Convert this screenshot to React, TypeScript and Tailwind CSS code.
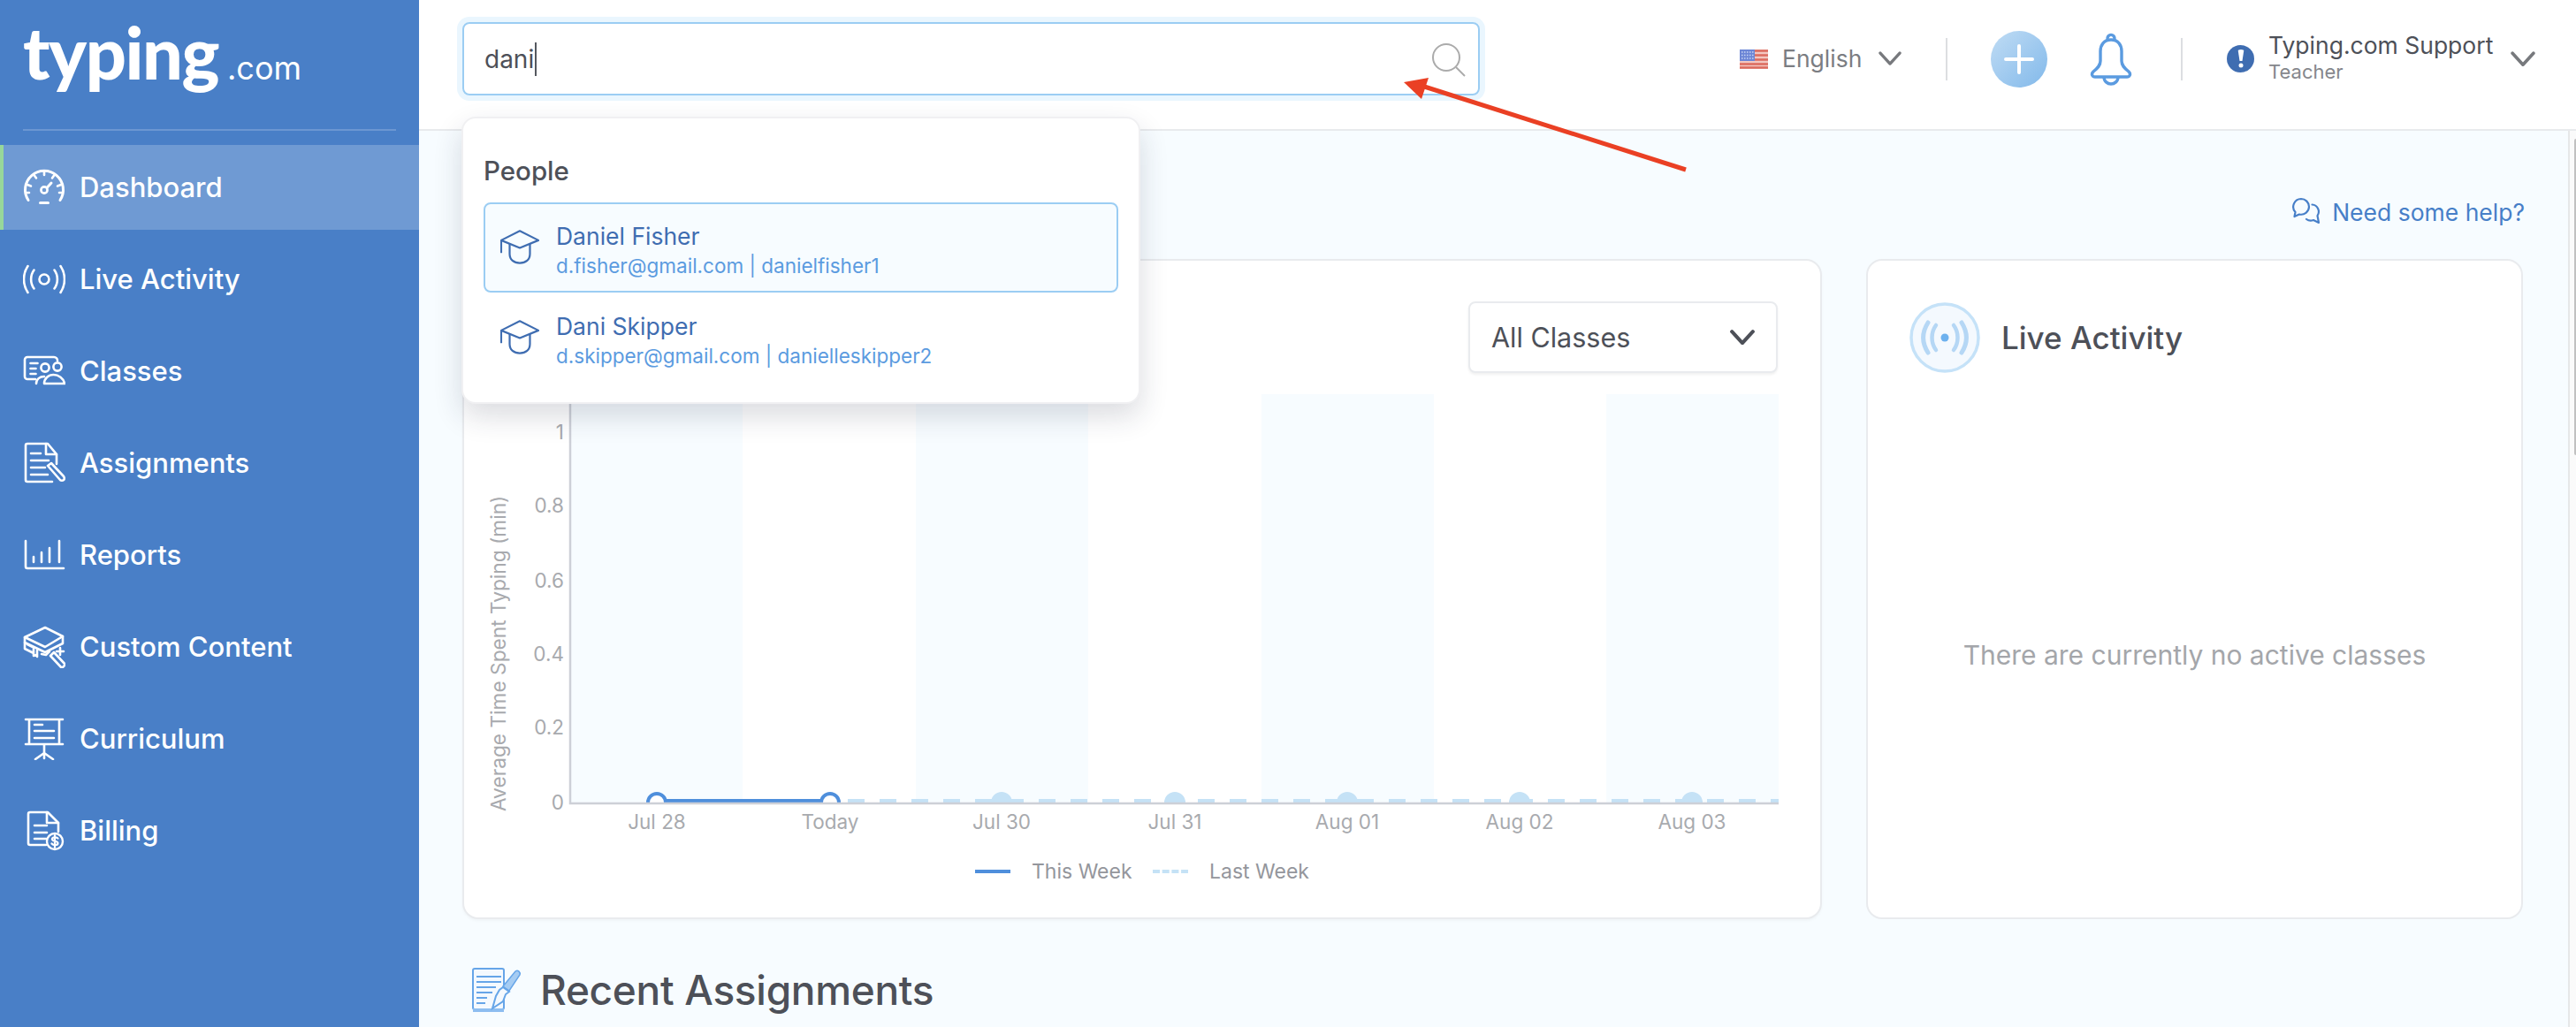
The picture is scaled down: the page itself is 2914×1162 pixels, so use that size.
import React from "react";

const NAV_STROKE = { fill: "none", stroke: "#fff", strokeWidth: 2.6, strokeLinecap: "round" as const, strokeLinejoin: "round" as const };

const Gauge = () => (
  <svg width="48" height="48" viewBox="0 0 48 48" {...NAV_STROKE}>
    <path d="M6 38.5 A21.5 21.5 0 1 1 42 38.5" strokeWidth="3" />
    <path d="M24 6v4M12.5 10l2.5 3.5M35.5 10 33 13.5M5 21l4 1.5M43 21l-4 1.5M3 30h4M45 30h-4" />
    <circle cx="24" cy="27" r="3.6" />
    <path d="M27 24.5 32 19" strokeWidth="3" />
    <path d="M19.5 41.5h9" strokeWidth="3" />
  </svg>
);
const Live = () => (
  <svg width="48" height="48" viewBox="0 0 48 48" {...NAV_STROKE}>
    <circle cx="24" cy="24" r="5.5" />
    <path d="M12.5 13.5c-4.5 6-4.5 15 0 21M35.5 13.5c4.5 6 4.5 15 0 21" />
    <path d="M5.5 9c-6 9-6 21 0 30M42.5 9c6 9 6 21 0 30" />
  </svg>
);
const ClassesIcon = () => (
  <svg width="48" height="48" viewBox="0 0 48 48" {...NAV_STROKE}>
    <path d="M14 33H5a3 3 0 0 1-3-3V11a3 3 0 0 1 3-3h30a4 4 0 0 1 4 4" />
    <path d="M8.5 15h8M8.5 21h6M8.5 27h6" />
    <circle cx="25" cy="20" r="4.6" />
    <circle cx="39" cy="19" r="4.6" />
    <path d="M15 38c0-5 4-8 9-8M24 38c0-6 5-10 10.500-10S46 32 47 38Z" />
  </svg>
);
const AssignIcon = () => (
  <svg width="48" height="48" viewBox="0 0 48 48" {...NAV_STROKE}>
    <path d="M33 45H5a2 2 0 0 1-2-2V4a2 2 0 0 1 2-2h23l10 12v11" />
    <path d="M26 2v12h12" />
    <path d="M9 13h11M9 21h20M9 29h16M9 37h19" />
    <path d="m28 27 4-3 14 15c1 1.500 1 3 0 4s-3 1-4 0Z" />
  </svg>
);
const ReportsIcon = () => (
  <svg width="48" height="48" viewBox="0 0 48 48" {...NAV_STROKE}>
    <path d="M3 8v29a2 2 0 0 0 2 2h41" />
    <path d="M12 26v6M21 21v11M30 16v16M41 8v24" />
  </svg>
);
const CustomIcon = () => (
  <svg width="48" height="48" viewBox="0 0 48 48" {...NAV_STROKE}>
    <path d="M25 2 45 12v8L25 30 2 19v-6Z" />
    <path d="M2 13 25 24 45 12" />
    <path d="M2 19v7l10 5M5 21l6 3M12 26v8l3-1 1 2v-7M21 32l5 1 4-4" />
    <path d="m31 34 4-4 13 14-4 4Z" />
    <path d="M38 29h8M42 25v8" />
  </svg>
);
const CurrIcon = () => (
  <svg width="48" height="48" viewBox="0 0 48 48" {...NAV_STROKE}>
    <path d="M3 2h42M7 2v28M41 2v28M3 30h42M24 31v10M14 47l10-7 10 7M24 41v5" />
    <path d="M13 8h9M13 15h22M13 23h22" />
  </svg>
);
const BillIcon = () => (
  <svg width="48" height="48" viewBox="0 0 48 48" {...NAV_STROKE}>
    <path d="M26 40H8a2 2 0 0 1-2-2V5a2 2 0 0 1 2-2h20l12 12v10" />
    <path d="M27 3v12h13" />
    <path d="M13 18h14M13 26h14M13 33h13" />
    <circle cx="36" cy="36" r="9" strokeWidth="2.4" />
    <path d="M39.500 32.500c-1-1.500-6.500-2-6.500 1s6.500 1.500 6.500 4.500-5.500 2.500-7 .5M36 29v14" strokeWidth="2.200" />
  </svg>
);

const NAV: [string, React.FC][] = [
  ["Dashboard", Gauge],
  ["Live Activity", Live],
  ["Classes", ClassesIcon],
  ["Assignments", AssignIcon],
  ["Reports", ReportsIcon],
  ["Custom Content", CustomIcon],
  ["Curriculum", CurrIcon],
  ["Billing", BillIcon],
];

const Cap = () => (
  <svg width="44" height="40" viewBox="-1 -1 46 41" className="shrink-0" fill="none" stroke="#3f6db1" strokeWidth="2.300" strokeLinejoin="round">
    <path d="M22 0 44 11 22 20 0 11Z" />
    <path d="M0 11v15" />
    <path d="M10 15v12c0 7 5 11 12 11s12-4 12-11V15" />
  </svg>
);

const Chev = ({ w = 26, color = "#77797d", sw = 3.4 }: { w?: number; color?: string; sw?: number }) => (
  <svg width={w} height={w * 0.62} viewBox="0 0 26 16" fill="none" stroke={color} strokeWidth={sw} strokeLinecap="round" strokeLinejoin="round" className="shrink-0">
    <path d="M2 2 13 14 24 2" />
  </svg>
);

const Flag = () => (
  <svg width="32" height="22" viewBox="0 0 32 22" className="shrink-0">
    <rect width="32" height="22" fill="#f3c7c0" />
    <path d="M0 1.500h32M0 6.500h32M0 11.500h32M0 16.500h32M0 20.500h32" stroke="#dc6b5e" strokeWidth="2.400" />
    <rect width="17" height="13" fill="#6c86d6" />
    <path d="M2 3h14M2 6.500h14M2 10h14" stroke="#c8d4f3" strokeWidth="1.500" strokeDasharray="1.500 1.500" />
  </svg>
);

const Chart = () => {
  const ys: [string, number][] = [["1", 489], ["0.8", 572], ["0.6", 657], ["0.4", 740], ["0.2", 823], ["0", 908]];
  const xs: [string, number][] = [["Jul 28", 743], ["Today", 939], ["Jul 30", 1133], ["Jul 31", 1329], ["Aug 01", 1524], ["Aug 02", 1719], ["Aug 03", 1914]];
  const dashes: number[] = [];
  for (let x = 959; x < 2012; x += 36) dashes.push(x);
  return (
    <svg width="1534" height="600" viewBox="525 430 1534 600" className="block mt-2" fontFamily="Inter, sans-serif">
      {[645, 1036, 1427, 1817].map((x) => (
        <rect key={x} x={x} y="446" width="195" height="462" fill="#f7fcff" />
      ))}
      <defs>
        <clipPath id="plot"><rect x="640" y="440" width="1372" height="468" /></clipPath>
      </defs>
      <g clipPath="url(#plot)">
        {dashes.map((x) => (
          <rect key={x} x={x} y="904" width="19" height="4" fill="#c5e2f6" />
        ))}
        {xs.slice(2).map(([l, x]) => (
          <circle key={l} cx={x} cy="908" r="12" fill="#c5e2f6" />
        ))}
        <path d="M743 906H939" stroke="#4f8fdc" strokeWidth="4" />
        <circle cx="743" cy="908" r="10" fill="#fff" stroke="#4f8fdc" strokeWidth="4" />
        <circle cx="939" cy="908" r="10" fill="#fff" stroke="#4f8fdc" strokeWidth="4" />
      </g>
      <path d="M645 446V909H2012" fill="none" stroke="#cdd0d7" strokeWidth="2.500" />
      {ys.map(([l, y]) => (
        <text key={l} x="638" y={y + 8} textAnchor="end" fontSize="22.500" fill="#a8aaae">{l}</text>
      ))}
      {xs.map(([l, x]) => (
        <text key={l} x={x} y={938} textAnchor="middle" fontSize="22.500" fill="#a8aaae">{l}</text>
      ))}
      <text transform="translate(572 918) rotate(-90)" fontSize="22.700" fill="#a8aaae">Average Time Spent Typing (min)</text>
      <rect x="1103" y="984" width="40" height="4" fill="#4f8fdc" />
      <text x="1167" y="994" fontSize="23" fill="#94969c">This Week</text>
      <path d="M1304 986h40" stroke="#c5e2f6" strokeWidth="4" strokeDasharray="8 2.700" />
      <text x="1368" y="994" fontSize="23" fill="#94969c">Last Week</text>
    </svg>
  );
};

export default function App() {
  return (
    <div className="relative flex h-[1162px] w-[2914px] overflow-hidden bg-white text-[#4d5058] font-['Inter',sans-serif]">
      {/* Sidebar */}
      <aside className="flex w-[474px] shrink-0 flex-col bg-[#497fc7] text-white">
        <div className="mx-[26px] h-[148px] border-b-2 border-[#6c97d2]">
          <div className="flex items-baseline pt-[15px] leading-[88px]">
            <span className="text-[81px] font-black tracking-[-1.500px] font-['Lato',sans-serif]">typing</span>
            <span className="ml-[10px] text-[36px] font-normal font-['Inter',sans-serif]">.com</span>
          </div>
        </div>
        <nav className="mt-4 flex flex-col gap-2">
          {NAV.map(([label, Icon], i) => (
            <div
              key={label}
              className={
                i === 0
                  ? "flex h-[96px] items-center gap-[16px] border-l-4 border-[#97d79a] bg-[#6f9ad3] pl-[22px] text-[31px] font-medium"
                  : "flex h-[96px] items-center gap-[16px] border-l-4 border-transparent pl-[22px] text-[31px] font-medium"
              }
            >
              <Icon />
              <span>{label}</span>
            </div>
          ))}
        </nav>
      </aside>

      {/* Main column */}
      <div className="flex min-w-0 flex-1 flex-col">
        <header className="flex h-[148px] shrink-0 items-center border-b-2 border-[#e8eaed] pb-[13px] pl-[49px]">
          <div className="relative h-[83px] w-[1151px] shrink-0">
            <div className="flex h-full items-center justify-between rounded-lg border-2 border-[#9bcdf3] pl-[23px] pr-[12px] shadow-[0_0_0_6px_#eaf6fe]">
              <div className="flex items-center text-[28px] leading-none">
                <span>dani</span>
                <span className="ml-px inline-block h-[38px] w-[2px] bg-[#55585f]" />
              </div>
              <svg width="42" height="42" viewBox="0 0 42 42" fill="none" stroke="#ababab" strokeWidth="2" className="mb-[-2px]">
                <circle cx="18" cy="18" r="15" />
                <path d="m29 29 10 10" />
              </svg>
            </div>
            {/* Search results */}
            <div className="absolute left-[-1px] top-[107px] z-10 w-[768px] rounded-[16px] border-2 border-[#f0f0f2] bg-white px-[23px] pb-[22px] pt-[41px] shadow-[0_14px_32px_rgba(30,40,60,0.16)]">
              <div className="mb-[18px] h-[36px] text-[29.500px] font-medium leading-[36px]">People</div>
              <div className="flex h-[102px] items-center gap-[19px] rounded-lg border-2 border-[#9bcdf3] bg-[#f7fcff] pl-[17px]">
                <Cap />
                <div className="mt-[7px] flex flex-col">
                  <span className="text-[26.500px] leading-[34px] text-[#3f6db1]">Daniel Fisher</span>
                  <span className="text-[22.500px] leading-[34px] text-[#5b9be0]">d.fisher@gmail.com | danielfisher1</span>
                </div>
              </div>
              <div className="flex h-[102px] items-center gap-[19px] rounded-lg border-2 border-transparent pl-[17px]">
                <Cap />
                <div className="mt-[7px] flex flex-col">
                  <span className="text-[26.500px] leading-[34px] text-[#3f6db1]">Dani Skipper</span>
                  <span className="text-[22.500px] leading-[34px] text-[#5b9be0]">d.skipper@gmail.com | danielleskipper2</span>
                </div>
              </div>
            </div>
          </div>

          <div className="ml-[294px] flex items-center">
            <Flag />
            <span className="ml-4 w-[89px] whitespace-nowrap text-[26.500px] text-[#7b7d82]">English</span>
            <span className="ml-5"><Chev w={26} /></span>
            <div className="ml-[50px] h-[48px] w-[2px] bg-[#dcdee1]" />
            <div className="relative ml-[49px] flex h-[64px] w-[64px] items-center justify-center rounded-full bg-gradient-to-br from-[#c0dcf4] to-[#82b9ea]">
              <svg width="34" height="34" viewBox="0 0 34 34" stroke="#fff" strokeWidth="4" strokeLinecap="round"><path d="M17 2v30M2 17h30" /></svg>
            </div>
            <svg width="48" height="60" viewBox="0 0 48 60" fill="none" stroke="#5b9be0" strokeWidth="3.400" strokeLinejoin="round" className="ml-[48px]">
              <path d="M21 9a4 4 0 1 1 6 0" />
              <path d="M24 8c-8 0-12 6-12 13v11c0 5-3 8-8 12-3 3-1 6 2 6h36c3 0 5-3 2-6-5-4-8-7-8-12V21c0-7-4-13-12-13Z" />
              <path d="M16 50c0 5 4 8 8 8s8-3 8-8" />
            </svg>
            <div className="ml-[55px] h-[48px] w-[2px] bg-[#dcdee1]" />
            <div className="relative ml-[50px] flex h-[31px] w-[31px] shrink-0 items-center justify-center rounded-full bg-[#3f6db1]">
              <svg width="8" height="21" viewBox="0 0 8 21" fill="#fff"><path d="M.8 1.500a3.200 1.500 0 0 1 6.400 0L5.500 13h-3Z" /><circle cx="4" cy="18" r="2.500" /></svg>
            </div>
            <div className="ml-4 mt-[-3px] flex w-[258px] flex-col">
              <span className="whitespace-nowrap text-[26.500px] leading-[32px]">Typing.com Support</span>
              <span className="text-[22px] leading-[28px] text-[#85878c]">Teacher</span>
            </div>
            <span className="ml-[16px]"><Chev w={28} /></span>
          </div>
        </header>

        <div className="flex min-h-0 flex-1">
          <main className="min-w-0 flex-1 bg-[#f7fcff] pl-[49px] pr-[51px]">
            <div className="flex h-[145px] items-start justify-end gap-3 pt-[75px]">
              <svg width="34" height="34" viewBox="0 0 34 34" fill="none" stroke="#477fc8" strokeWidth="2.200" strokeLinejoin="round" strokeLinecap="round">
                <path d="M11 2a9 9 0 0 1 9 9 9 9 0 0 1-11 8.500L3.500 22l1-5A9 9 0 0 1 11 2Z" />
                <path d="M23.500 8.500a8 8 0 0 1 6 12.500l1.500 8-6-3a8 8 0 0 1-8-1" />
              </svg>
              <span className="mr-[-2px] whitespace-nowrap text-[26.500px] font-normal leading-[34px] text-[#477fc8]">Need some help?</span>
            </div>
            <div className="flex gap-[50px]">
              <section className="h-[747px] w-[1538px] rounded-[18px] border-2 border-[#e9ebee] bg-white shadow-[0_2px_3px_rgba(0,0,0,0.03)]">
                <div className="flex justify-end pr-[48px] pt-[46px]">
                  <div className="flex h-[81px] w-[350px] items-center justify-between rounded-lg border-2 border-[#e9ebee] bg-white pl-[24px] pr-[24px] text-[30.500px] shadow-[0_2px_3px_rgba(0,0,0,0.06)]">
                    <span>All Classes</span>
                    <Chev w={28} color="#4d5058" sw={3.800} />
                  </div>
                </div>
                <Chart />
              </section>
              <section className="flex h-[747px] w-[743px] flex-col rounded-[18px] border-2 border-[#e9ebee] bg-white">
                <div className="flex items-center gap-[24px] pl-[47px] pt-[47px]">
                  <svg width="80" height="80" viewBox="0 0 80 80" fill="none" strokeLinecap="round">
                    <circle cx="40" cy="40" r="38" fill="#f4f9fe" stroke="#c5e2f8" strokeWidth="3.500" />
                    <circle cx="40" cy="40" r="4.500" fill="#6db1ee" />
                    <path d="M30 26c-6 8-6 20 0 28M50 26c6 8 6 20 0 28" stroke="#b5d7f5" strokeWidth="4.500" />
                    <path d="M21 23c-7 11-7 23 0 34M59 23c7 11 7 23 0 34" stroke="#b5d7f5" strokeWidth="5" />
                  </svg>
                  <span className="text-[35px] font-medium leading-[44px]">Live Activity</span>
                </div>
                <div className="flex flex-1 items-start justify-center pt-[297px] text-[30px] text-[#a4a6aa]">
                  There are currently no active classes
                </div>
              </section>
            </div>
            <div className="mt-[54px] flex items-center gap-[20px] pl-[10px]">
              <svg width="58" height="52" viewBox="0 0 58 52" fill="none" className="shrink-0">
                <rect x="2" y="2" width="35" height="46" rx="2" fill="#f4f9fe" stroke="#66a5e8" strokeWidth="2" />
                <rect x="2" y="47" width="35" height="4" fill="#8dbdf0" />
                <path d="M6 11h28M6 17h28M6 23h22M6 29h18M6 35h12M6 41h10" stroke="#66a5e8" strokeWidth="2" />
                <path d="m36 22 14-17c3-2 6 1 5 4L43 27Z" fill="#a5ccf3" stroke="#66a5e8" strokeWidth="1.500" />
                <path d="m36 23 7 5-4 3-3 8-12 8 4-14 4-7Z" fill="#f4f9fe" stroke="#66a5e8" strokeWidth="2" />
              </svg>
              <h2 className="text-[46px] font-medium leading-[52px] tracking-[-0.3px]">Recent Assignments</h2>
            </div>
          </main>
          <div className="w-[9px] shrink-0 border-l-2 border-[#e6e7e8] bg-[#fafafa] pl-[5px] pt-[9px]">
            <div className="h-[358px] w-[2px] rounded-l-full bg-[#c1c1c1]" />
          </div>
        </div>
      </div>

      {/* Annotation arrow */}
      <svg width="2914" height="1162" viewBox="0 0 2914 1162" className="pointer-events-none absolute inset-0 z-20">
        <path d="M1907 192 1605 96" stroke="#ea4024" strokeWidth="5" />
        <path d="M1588 93 1616 88 1608 112Z" fill="#ea4024" />
      </svg>
    </div>
  );
}
